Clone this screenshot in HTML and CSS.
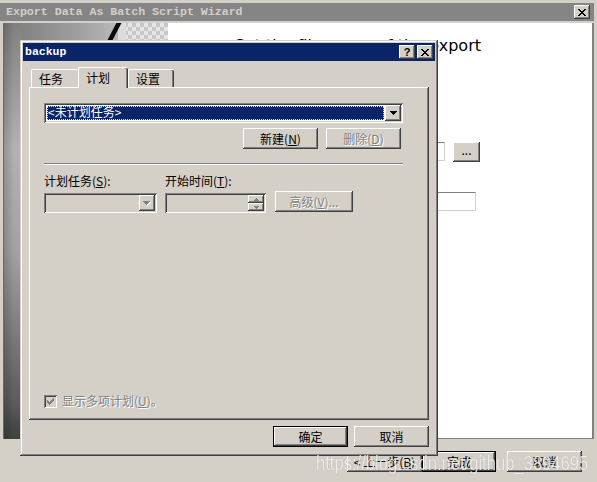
FILE: index.html
```html
<!DOCTYPE html>
<html lang="zh-CN">
<head>
	<meta charset="UTF-8">
	<title>backup</title>
	<link rel="stylesheet" href="styles.css">
</head>
<body>
	<!-- Wizard window behind the dialog -->
	<div class="wizard">
		<div class="wizard_title">
			<span class="wizard_title_text">Export Data As Batch Script Wizard</span>
			<button class="caption_button">
				<svg width="8" height="7" viewBox="0 0 8 7" shape-rendering="crispEdges"><path d="M0 0h2v1H0zM6 0h2v1H6zM1 1h2v1H1zM5 1h2v1H5zM2 2h4v1H2zM3 3h2v1H3zM2 4h4v1H2zM1 5h2v1H1zM5 5h2v1H5zM0 6h2v1H0zM6 6h2v1H6z" fill="#000"/></svg>
			</button>
		</div>
		<div class="wizard_body">
			<div class="wizard_art">
				<svg width="164" height="416" viewBox="0 0 164 416">
					<defs>
						<linearGradient id="strip" x1="0" y1="0" x2="0" y2="1">
							<stop offset="0" stop-color="#808080"/>
							<stop offset="0.3" stop-color="#b2b2b2"/>
							<stop offset="0.55" stop-color="#a2a2a2"/>
							<stop offset="0.92" stop-color="#5a5a5a"/>
							<stop offset="0.96" stop-color="#4a4a4a"/>
							<stop offset="1" stop-color="#3e443e"/>
						</linearGradient>
						<linearGradient id="top_band" x1="0" y1="0" x2="1" y2="0">
							<stop offset="0" stop-color="#828282"/>
							<stop offset="0.6" stop-color="#a0a0a0"/>
							<stop offset="1" stop-color="#bcbcbc"/>
						</linearGradient>
						<linearGradient id="shade" x1="0" y1="0" x2="1" y2="0">
							<stop offset="0" stop-color="#000" stop-opacity="0.18"/>
							<stop offset="1" stop-color="#000" stop-opacity="0"/>
						</linearGradient>
						<pattern id="checker" width="8" height="8" patternUnits="userSpaceOnUse">
							<rect width="8" height="8" fill="#e6e6e6"/>
							<rect width="4" height="4" fill="#c6c6c6"/>
							<rect x="4" y="4" width="4" height="4" fill="#c6c6c6"/>
						</pattern>
					</defs>
					<rect width="164" height="416" fill="url(#strip)"/>
					<rect width="10" height="416" fill="url(#shade)"/>
					<rect x="17" width="100" height="20" fill="url(#top_band)"/>
					<rect x="114" width="50" height="20" fill="#dcdcdc"/>
					<rect x="122" width="42" height="20" fill="url(#checker)"/>
					<path d="M116 -2 L105 19" stroke="#0a0a0a" stroke-width="4.5"/>
				</svg>
			</div>
			<div class="wizard_page">
				<div class="wizard_heading"><span>Set the file name of the export</span></div>
				<div class="file_row">
					<div class="textbox path_box"></div>
					<button class="btn browse_button">...</button>
				</div>
				<div class="file_row second">
					<div class="textbox name_box"></div>
				</div>
			</div>
		</div>
		<div class="wizard_footer">
			<button class="btn">&lt; 上一步(<u>B</u>)</button>
			<button class="btn default finish_button">完成</button>
			<button class="btn cancel_button">取消</button>
		</div>
	</div>

	<!-- Schedule dialog -->
	<div class="dialog">
		<div class="dialog_title">
			<span class="dialog_title_text">backup</span>
			<div class="caption_buttons">
				<button class="caption_button help_button">?</button>
				<button class="caption_button">
					<svg width="8" height="7" viewBox="0 0 8 7" shape-rendering="crispEdges"><path d="M0 0h2v1H0zM6 0h2v1H6zM1 1h2v1H1zM5 1h2v1H5zM2 2h4v1H2zM3 3h2v1H3zM2 4h4v1H2zM1 5h2v1H1zM5 5h2v1H5zM0 6h2v1H0zM6 6h2v1H6z" fill="#000"/></svg>
				</button>
			</div>
		</div>
		<div class="dialog_body">
			<div class="tabs">
				<div class="tab first_tab">任务</div>
				<div class="tab selected">计划</div>
				<div class="tab last_tab">设置</div>
			</div>
			<div class="tab_panel">
				<div class="combo schedule_list">
					<div class="combo_value"><span class="combo_selection">&lt;未计划任务&gt;</span></div>
					<div class="combo_button">
						<svg width="7" height="4" viewBox="0 0 7 4" shape-rendering="crispEdges"><path d="M0 0h7v1H0zM1 1h5v1H1zM2 2h3v1H2zM3 3h1v1H3z" fill="#000"/></svg>
					</div>
				</div>
				<div class="schedule_buttons">
					<button class="btn">新建(<u>N</u>)</button>
					<button class="btn disabled">删除(<u>D</u>)</button>
				</div>
				<div class="separator"></div>
				<div class="field_labels">
					<label class="field_label task_label">计划任务(<u>S</u>):</label>
					<label class="field_label">开始时间(<u>T</u>):</label>
				</div>
				<div class="field_row">
					<div class="combo task_type disabled">
						<div class="combo_value"></div>
						<div class="combo_button">
							<svg width="8" height="5" viewBox="0 0 8 5" shape-rendering="crispEdges"><path d="M1 1h7v1H1zM2 2h5v1H2zM3 3h3v1H3zM4 4h1v1H4z" fill="#fff"/><path d="M0 0h7v1H0zM1 1h5v1H1zM2 2h3v1H2zM3 3h1v1H3z" fill="#808080"/></svg>
						</div>
					</div>
					<div class="time_field">
						<div class="time_value"></div>
						<div class="spinner">
							<div class="spin_button">
								<svg width="5" height="3" viewBox="0 0 5 3" shape-rendering="crispEdges"><path d="M2 0h1v1H2zM1 1h3v1H1zM0 2h5v1H0z" fill="#808080"/></svg>
							</div>
							<div class="spin_button">
								<svg width="5" height="3" viewBox="0 0 5 3" shape-rendering="crispEdges"><path d="M0 0h5v1H0zM1 1h3v1H1zM2 2h1v1H2z" fill="#808080"/></svg>
							</div>
						</div>
					</div>
					<button class="btn disabled advanced_button">高级(<u>V</u>)...</button>
				</div>
				<div class="multi_schedule">
					<span class="checkbox">
						<svg width="7" height="7" viewBox="0 0 7 7" shape-rendering="crispEdges"><path d="M6 0h1v1H6zM5 1h2v1H5zM0 2h1v1H0zM4 2h3v1H4zM0 3h2v1H0zM3 3h3v1H3zM0 4h5v1H0zM1 5h3v1H1zM2 6h1v1H2z" fill="#808080"/></svg>
					</span>
					<span class="check_label">显示多项计划(<u>U</u>)。</span>
				</div>
			</div>
			<div class="dialog_buttons">
				<button class="btn default">确定</button>
				<button class="btn">取消</button>
			</div>
		</div>
	</div>

	<div class="watermark">https://blog.csdn.net/github_3894695</div>
</body>
</html>
```

FILE: styles.css
```css
* {
	box-sizing: border-box;
}

body {
	margin: 0;
	width: 597px;
	height: 482px;
	overflow: hidden;
	position: relative;
	background-color: #d4d0c8;
	font-family: "Noto Sans CJK SC", "Liberation Sans", sans-serif;
	font-size: 12px;
	line-height: 14px;
	color: #000;
}

u {
	text-decoration: underline;
	text-underline-offset: 1px;
}

/* Classic 3D controls */

.btn {
	display: flex;
	align-items: center;
	justify-content: center;
	width: 75px;
	height: 21px;
	padding: 0;
	border: 0;
	background-color: #d4d0c8;
	font-family: inherit;
	font-size: 12px;
	line-height: 14px;
	color: #000;
	box-shadow: inset -1px -1px #404040, inset 1px 1px #fff, inset -2px -2px #808080;
}

.btn.default {
	box-shadow: inset 0 0 0 1px #000, inset -2px -2px #404040, inset 2px 2px #fff, inset -3px -3px #808080;
}

.btn.disabled {
	color: #808080;
	text-shadow: 1px 1px 0 #fff;
}

.caption_button {
	display: flex;
	align-items: center;
	justify-content: center;
	width: 16px;
	height: 14px;
	padding: 0;
	border: 0;
	background-color: #d4d0c8;
	box-shadow: inset -1px -1px #404040, inset 1px 1px #fff, inset -2px -2px #808080;
}

.textbox {
	height: 19px;
	background-color: #fff;
	border: 1px solid;
	border-color: #808080 #d4d0c8 #d4d0c8 #808080;
}

/* Wizard window */

.wizard {
	position: absolute;
	left: -3px;
	top: 0;
	width: 600px;
	height: 500px;
	padding: 3px 3px 0 3px;
	background-color: #d4d0c8;
}

.wizard_title {
	display: flex;
	align-items: center;
	justify-content: space-between;
	height: 18px;
	padding: 0 4px 0 6px;
	background-color: #858585;
}

.wizard_title_text {
	font-family: "Liberation Mono", monospace;
	font-weight: bold;
	font-size: 11.6px;
	color: #d4d0c8;
	white-space: nowrap;
}

.wizard_body {
	display: flex;
	height: 416px;
	margin-top: 2px;
	padding-left: 3px;
}

.wizard_art {
	width: 165px;
	border-left: 1px solid #6a6a6a;
	overflow: hidden;
}

.wizard_art svg {
	display: block;
}

.wizard_page {
	flex: 1;
	background-color: #fff;
	border-right: 2px solid #808080;
	border-bottom: 1px solid #808080;
}

.wizard_heading {
	display: flex;
	justify-content: flex-end;
	width: 313px;
	height: 19px;
	margin-top: 13px;
	font-family: "DejaVu Sans", sans-serif;
	font-size: 16px;
	line-height: 19px;
	white-space: nowrap;
}

.file_row {
	display: flex;
	align-items: flex-start;
	gap: 8px;
	margin-top: 87px;
	margin-left: 32px;
}

.file_row.second {
	margin-top: 30px;
}

.path_box {
	width: 245px;
}

.name_box {
	width: 276px;
	height: 19px;
}

.browse_button {
	width: 27px;
	height: 20px;
	line-height: 10px;
	align-items: flex-start;
	padding-top: 3px;
}

.wizard_footer {
	display: flex;
	justify-content: flex-end;
	padding: 12px 12px 0 0;
}

.finish_button {
	width: 74px;
	margin-right: 11px;
}

/* Schedule dialog */

.dialog {
	position: absolute;
	left: 20px;
	top: 40px;
	width: 418px;
	height: 416px;
	padding: 3px;
	background-color: #d4d0c8;
	box-shadow: inset -1px -1px #404040, inset 1px 1px #d4d0c8, inset -2px -2px #808080, inset 2px 2px #fff;
}

.dialog_title {
	display: flex;
	align-items: center;
	justify-content: space-between;
	height: 18px;
	padding: 0 2px 0 2px;
	background-color: #0a246a;
}

.dialog_title_text {
	font-family: "Liberation Mono", monospace;
	font-weight: bold;
	font-size: 11.5px;
	color: #fff;
}

.caption_buttons {
	display: flex;
	gap: 2px;
}

.help_button {
	font-family: "Liberation Sans", sans-serif;
	font-weight: bold;
	font-size: 11px;
	line-height: 11px;
	color: #000;
}

.dialog_body {
	padding: 6px 6px 0 6px;
}

.tabs {
	display: flex;
	align-items: flex-end;
	height: 20px;
	padding-left: 2px;
	position: relative;
	z-index: 1;
}

.tab {
	height: 18px;
	padding-top: 2px;
	padding-left: 7px;
	background-color: #d4d0c8;
	border-top: 1px solid #fff;
	border-left: 1px solid #fff;
	border-radius: 2px 2px 0 0;
}

.first_tab {
	width: 47px;
}

.tab.selected {
	width: 50px;
	height: 21px;
	margin-bottom: -1px;
	padding-top: 3px;
	box-shadow: inset -1px 0 #404040, inset -2px 0 #808080;
}

.last_tab {
	width: 46px;
	box-shadow: inset -1px 0 #404040, inset -2px 0 #808080;
}

.tab_panel {
	display: flex;
	flex-direction: column;
	height: 333px;
	padding: 16px 26px 0 15px;
	box-shadow: inset -1px -1px #404040, inset 1px 1px #fff, inset -2px -2px #808080;
}

.combo {
	display: flex;
	height: 20px;
	padding: 2px;
	background-color: #fff;
	box-shadow: inset 1px 1px #808080, inset -1px -1px #fff, inset 2px 2px #404040, inset -2px -2px #d4d0c8;
}

.combo.disabled {
	background-color: #d4d0c8;
}

.combo_value {
	flex: 1;
	display: flex;
	padding: 1px;
}

.combo_selection {
	flex: 1;
	padding-left: 1px;
	line-height: 12px;
	color: #fff;
	background-color: #0a246a;
	outline: 1px dotted #e8e4c0;
	outline-offset: -1px;
}

.combo_button {
	display: flex;
	align-items: center;
	justify-content: center;
	width: 16px;
	background-color: #d4d0c8;
	box-shadow: inset -1px -1px #404040, inset 1px 1px #fff, inset -2px -2px #808080;
}

.schedule_list {
	width: 359px;
}

.schedule_buttons {
	display: flex;
	justify-content: flex-end;
	gap: 8px;
	margin-top: 5px;
	margin-right: 2px;
}

.separator {
	height: 2px;
	margin-top: 14px;
	border-top: 1px solid #808080;
	border-bottom: 1px solid #fff;
}

.field_labels {
	display: flex;
	gap: 8px;
	margin-top: 9px;
}

.task_label {
	width: 113px;
}

.field_row {
	display: flex;
	align-items: flex-start;
	margin-top: 5px;
}

.task_type {
	width: 113px;
	margin-right: 8px;
}

.time_field {
	display: flex;
	width: 101px;
	height: 20px;
	padding: 2px;
	background-color: #d4d0c8;
	box-shadow: inset 1px 1px #808080, inset -1px -1px #fff, inset 2px 2px #404040, inset -2px -2px #d4d0c8;
}

.time_value {
	flex: 1;
}

.spinner {
	display: flex;
	flex-direction: column;
	width: 16px;
}

.spin_button {
	flex: 1;
	display: flex;
	align-items: center;
	justify-content: center;
	background-color: #d4d0c8;
	box-shadow: inset -1px -1px #404040, inset 1px 1px #fff, inset -2px -2px #808080;
}

.advanced_button {
	width: 78px;
	margin-left: 9px;
	margin-top: -2px;
}

.multi_schedule {
	display: flex;
	align-items: center;
	gap: 5px;
	margin-top: auto;
	margin-bottom: 12px;
}

.checkbox {
	display: flex;
	align-items: center;
	justify-content: center;
	width: 13px;
	height: 13px;
	background-color: #d4d0c8;
	box-shadow: inset 1px 1px #808080, inset -1px -1px #fff, inset 2px 2px #404040, inset -2px -2px #d4d0c8;
}

.check_label {
	color: #808080;
	text-shadow: 1px 1px 0 #fff;
}

.dialog_buttons {
	display: flex;
	justify-content: flex-end;
	gap: 6px;
	margin-top: 6px;
}

/* Blog watermark over the screenshot */

.watermark {
	position: absolute;
	left: 316px;
	top: 452px;
	font-family: "Liberation Sans", sans-serif;
	font-size: 20px;
	line-height: 22px;
	color: rgba(255, 255, 255, 0.8);
	text-shadow: 0 0 1px rgba(0, 0, 0, 0.3);
	white-space: nowrap;
	transform: scaleX(0.83);
	transform-origin: left top;
}
```
